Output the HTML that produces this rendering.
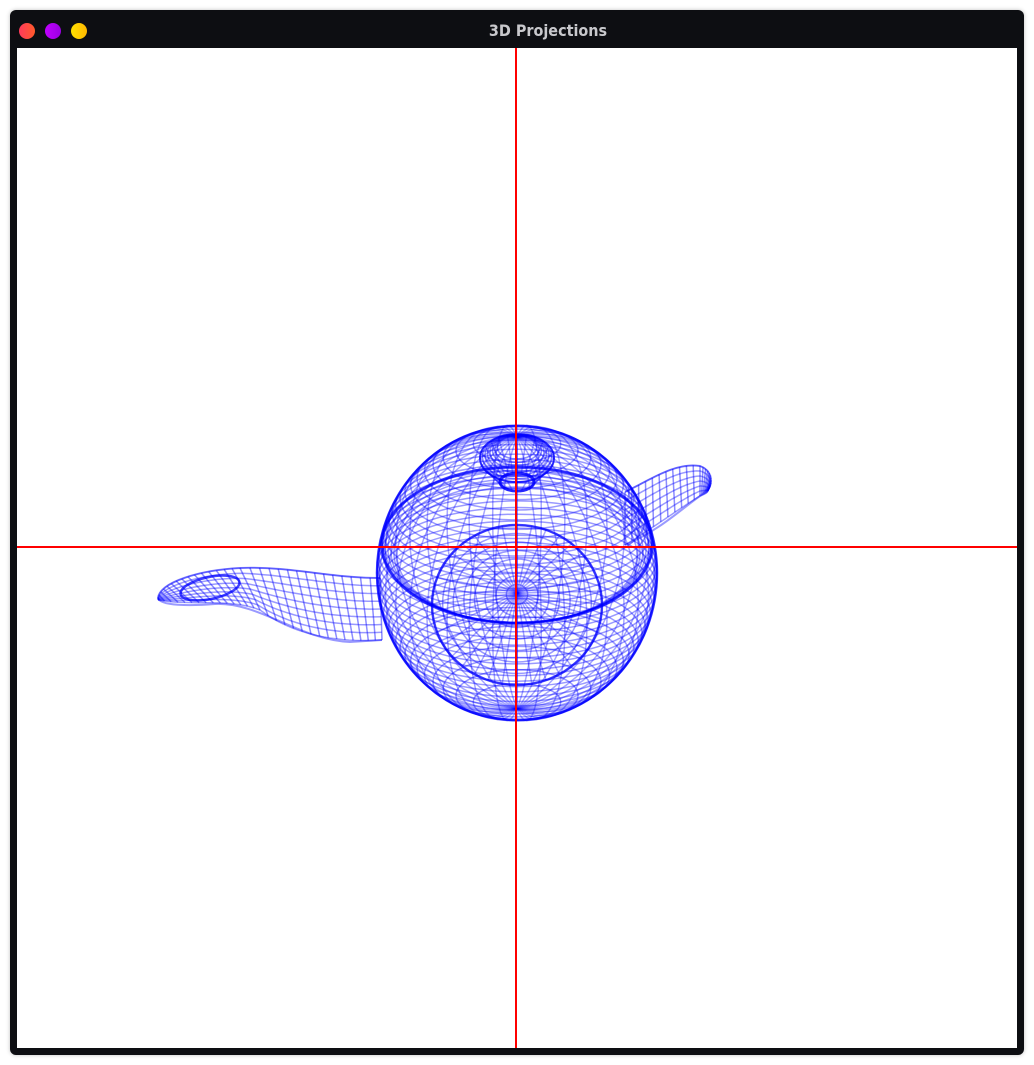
<!DOCTYPE html>
<html><head><meta charset="utf-8"><style>
html,body{margin:0;padding:0;background:#fff;width:1034px;height:1065px;overflow:hidden}
.win{position:absolute;left:10px;top:10px;width:1014px;height:1045px;background:#0d0e12;border-radius:6px;box-shadow:0 0 4px rgba(0,0,0,.25)}
.t{position:absolute;left:470px;width:136px;top:11px;text-align:center;color:#c8c8cc;font:bold 16px "DejaVu Sans Condensed","Liberation Sans",sans-serif}
.d{position:absolute;top:13px;width:16px;height:16px;border-radius:50%}
.cv{position:absolute;left:7px;top:38px;width:1000px;height:1000px;background:#fff}
</style></head><body>
<div class="win">
<div class="d" style="left:9px;background:linear-gradient(90deg,#ff3a5c,#ff5a2a)"></div>
<div class="d" style="left:35px;background:linear-gradient(90deg,#c000ff,#9a00e0)"></div>
<div class="d" style="left:61px;background:linear-gradient(90deg,#ffe000,#ffb800)"></div>
<div class="t">3D Projections</div>
<div class="cv">
<svg width="1000" height="1000" viewBox="17 48 1000 1000" xmlns="http://www.w3.org/2000/svg">
<g id="w" fill="none" stroke="#0000ff" stroke-opacity="0.4" stroke-width="1.5">
<path d="M380 578 C330 578 290 566 240 568 C200 570 160 582 158 598 C160 606 190 606 215 604 C260 602 300 640 350 642 L382 640" stroke-width="2"/>
<path d="M625 492 C650 480 675 462 700 466 C715 472 712 488 700 496 C680 510 660 530 625 545" stroke-width="2"/>
<ellipse cx="517" cy="573" rx="140" ry="147" stroke-width="2.5" stroke-opacity=".75"/>
<ellipse cx="517" cy="545" rx="135" ry="78" stroke-width="3" stroke-opacity=".75"/>
<ellipse cx="517" cy="605" rx="85" ry="80" stroke-width="2.5" stroke-opacity=".7"/>
<ellipse cx="517" cy="458" rx="37" ry="24" stroke-width="2" stroke-opacity=".7"/>
<ellipse cx="517" cy="482" rx="17" ry="9" stroke-width="3" stroke-opacity=".85"/>
<ellipse cx="210" cy="588" rx="30" ry="11" transform="rotate(-12 210 588)" stroke-width="2.5" stroke-opacity=".75"/>
</g>
<rect x="17" y="546" width="1000" height="2" fill="#ff0000"/>
<rect x="515" y="48" width="2" height="1000" fill="#ff0000"/>
</svg>
</div>
</div>
<script>
(function(){
var g=document.getElementById('w'),NS='http://www.w3.org/2000/svg';
function P(d,o,w){var p=document.createElementNS(NS,'path');p.setAttribute('d',d);if(o)p.setAttribute('stroke-opacity',o);if(w)p.setAttribute('stroke-width',w);g.appendChild(p);}
function E(cx,cy,rx,ry,o){var p=document.createElementNS(NS,'ellipse');p.setAttribute('cx',cx);p.setAttribute('cy',cy);p.setAttribute('rx',rx);p.setAttribute('ry',ry);if(o)p.setAttribute('stroke-opacity',o);g.appendChild(p);}
var i,j,t,a,d;
for(i=-19;i<=19;i++){t=i/20;var r=140*Math.sqrt(1-t*t);E(517,573+140*t*0.97,r,r*0.42);}
for(i=0;i<36;i++){a=i*Math.PI/18;d='';for(j=0;j<=30;j++){var ph=-Math.PI/2+j*Math.PI/30;var x=140*Math.cos(ph)*Math.cos(a),z=140*Math.cos(ph)*Math.sin(a),y=140*Math.sin(ph);var X=517+x,Y=573+y*0.97+0.42*z;d+=(j?'L':'M')+X.toFixed(1)+' '+Y.toFixed(1);}P(d,0.35);}
for(i=0;i<6;i++)E(517,545+i*2,135-i*3,78-i*2,0.4);
for(i=1;i<=8;i++)E(517,593+i*1.5,85*i/8,80*i/8,0.4);
for(i=0;i<36;i++){a=i*Math.PI/18;P('M517 593L'+(517+85*Math.cos(a)).toFixed(1)+' '+(605+80*Math.sin(a)).toFixed(1),0.35);}
for(i=0;i<8;i++)E(517,458-i*1.5,37-i*2.5,24-i*1.8,0.45);
for(i=0;i<24;i++){a=i*Math.PI/12;P('M'+(517+37*Math.cos(a)).toFixed(1)+' '+(458+24*Math.sin(a)).toFixed(1)+'L'+(517+17*Math.cos(a)).toFixed(1)+' '+(482+9*Math.sin(a)).toFixed(1),0.35);}
function bez(p,t){var u=1-t;return [u*u*u*p[0]+3*u*u*t*p[2]+3*u*t*t*p[4]+t*t*t*p[6],u*u*u*p[1]+3*u*u*t*p[3]+3*u*t*t*p[5]+t*t*t*p[7]];}
function seg(S,t){var n=S.length,k=Math.min(n-1,Math.floor(t*n));return bez(S[k],t*n-k);}
function loft(A,B,nl,nc){for(i=0;i<=nl;i++){var s=i/nl;d='';for(j=0;j<=40;j++){var pa=seg(A,j/40),pb=seg(B,j/40);d+=(j?'L':'M')+(pa[0]+(pb[0]-pa[0])*s).toFixed(1)+' '+(pa[1]+(pb[1]-pa[1])*s).toFixed(1);}P(d,0.4);}
for(j=0;j<=nc;j++){var pa=seg(A,j/nc),pb=seg(B,j/nc);P('M'+pa[0].toFixed(1)+' '+pa[1].toFixed(1)+'L'+pb[0].toFixed(1)+' '+pb[1].toFixed(1),0.45);}}
var sTop=[[380,578,330,578,290,566,240,568],[240,568,200,570,160,582,158,598]];
var sBot=[[382,640,350,642,300,640,260,610],[260,610,230,598,190,606,158,600]];
loft(sTop,sBot,8,30);
var hTop=[[625,492,650,480,675,462,700,466],[700,466,712,470,714,482,708,490]];
var hBot=[[625,545,650,530,680,508,700,496],[700,496,706,494,708,492,708,490]];
loft(hTop,hBot,6,22);
})();
</script>
</body></html>
